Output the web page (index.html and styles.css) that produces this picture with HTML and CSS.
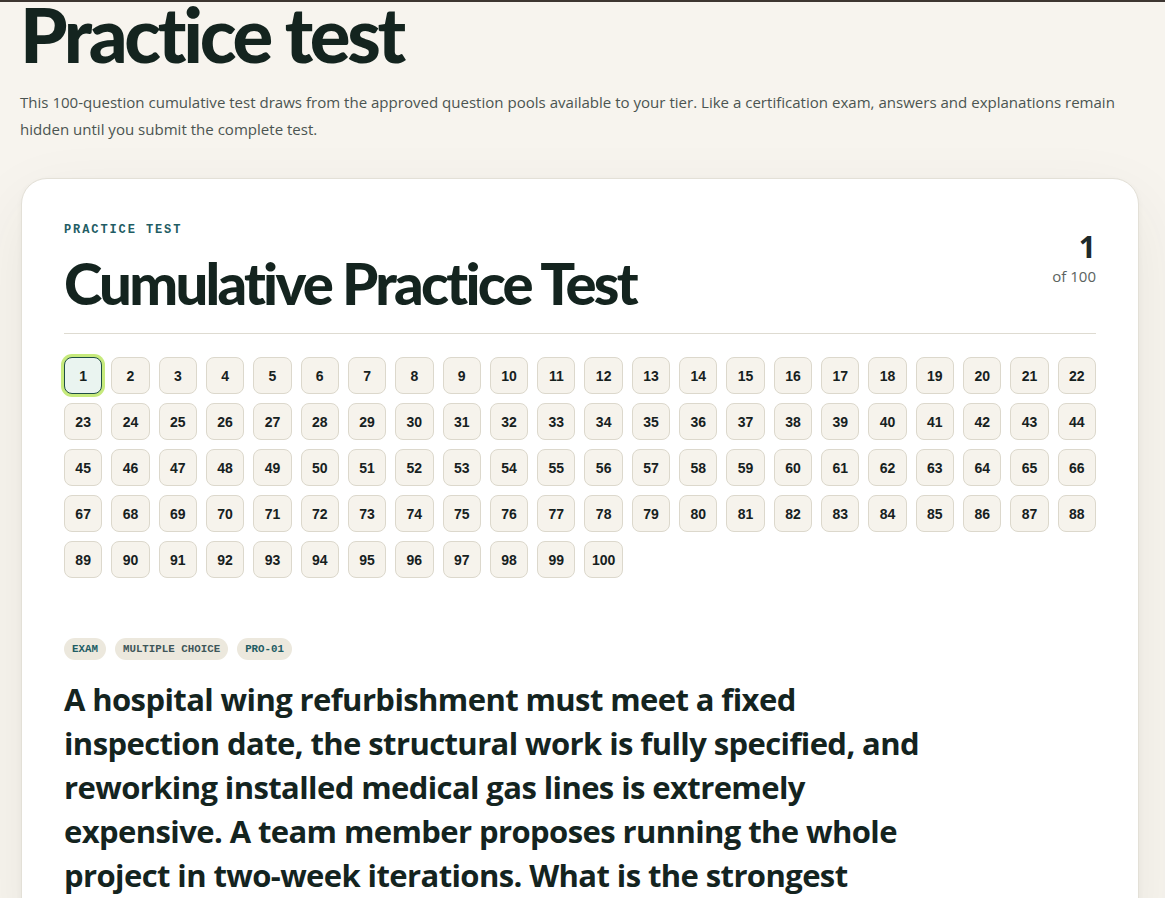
FILE: index.html
```html
<!DOCTYPE html>
<html lang="en">
<head>
<meta charset="utf-8">
<title>Practice test</title>
<link rel="stylesheet" href="styles.css">
</head>
<body>
<div class="topbar"></div>
<main class="page">
  <header class="intro">
    <h1 class="intro-title">Practice test</h1>
    <p class="intro-text">This 100-question cumulative test draws from the approved question pools available to your tier. Like a certification exam, answers and explanations remain hidden until you submit the complete test.</p>
  </header>
  <section class="card">
    <div class="card-head">
      <div class="card-titles">
        <div class="eyebrow">PRACTICE TEST</div>
        <h2 class="card-title">Cumulative Practice Test</h2>
      </div>
      <div class="counter">
        <div class="counter-num">1</div>
        <div class="counter-of">of 100</div>
      </div>
    </div>
    <div class="qgrid">
      <button class="qbtn is-current">1</button><button class="qbtn">2</button><button class="qbtn">3</button><button class="qbtn">4</button><button class="qbtn">5</button><button class="qbtn">6</button><button class="qbtn">7</button><button class="qbtn">8</button><button class="qbtn">9</button><button class="qbtn">10</button>
      <button class="qbtn">11</button><button class="qbtn">12</button><button class="qbtn">13</button><button class="qbtn">14</button><button class="qbtn">15</button><button class="qbtn">16</button><button class="qbtn">17</button><button class="qbtn">18</button><button class="qbtn">19</button><button class="qbtn">20</button>
      <button class="qbtn">21</button><button class="qbtn">22</button><button class="qbtn">23</button><button class="qbtn">24</button><button class="qbtn">25</button><button class="qbtn">26</button><button class="qbtn">27</button><button class="qbtn">28</button><button class="qbtn">29</button><button class="qbtn">30</button>
      <button class="qbtn">31</button><button class="qbtn">32</button><button class="qbtn">33</button><button class="qbtn">34</button><button class="qbtn">35</button><button class="qbtn">36</button><button class="qbtn">37</button><button class="qbtn">38</button><button class="qbtn">39</button><button class="qbtn">40</button>
      <button class="qbtn">41</button><button class="qbtn">42</button><button class="qbtn">43</button><button class="qbtn">44</button><button class="qbtn">45</button><button class="qbtn">46</button><button class="qbtn">47</button><button class="qbtn">48</button><button class="qbtn">49</button><button class="qbtn">50</button>
      <button class="qbtn">51</button><button class="qbtn">52</button><button class="qbtn">53</button><button class="qbtn">54</button><button class="qbtn">55</button><button class="qbtn">56</button><button class="qbtn">57</button><button class="qbtn">58</button><button class="qbtn">59</button><button class="qbtn">60</button>
      <button class="qbtn">61</button><button class="qbtn">62</button><button class="qbtn">63</button><button class="qbtn">64</button><button class="qbtn">65</button><button class="qbtn">66</button><button class="qbtn">67</button><button class="qbtn">68</button><button class="qbtn">69</button><button class="qbtn">70</button>
      <button class="qbtn">71</button><button class="qbtn">72</button><button class="qbtn">73</button><button class="qbtn">74</button><button class="qbtn">75</button><button class="qbtn">76</button><button class="qbtn">77</button><button class="qbtn">78</button><button class="qbtn">79</button><button class="qbtn">80</button>
      <button class="qbtn">81</button><button class="qbtn">82</button><button class="qbtn">83</button><button class="qbtn">84</button><button class="qbtn">85</button><button class="qbtn">86</button><button class="qbtn">87</button><button class="qbtn">88</button><button class="qbtn">89</button><button class="qbtn">90</button>
      <button class="qbtn">91</button><button class="qbtn">92</button><button class="qbtn">93</button><button class="qbtn">94</button><button class="qbtn">95</button><button class="qbtn">96</button><button class="qbtn">97</button><button class="qbtn">98</button><button class="qbtn">99</button><button class="qbtn">100</button>
    </div>
    <div class="tags">
      <span class="tag tag-accent">EXAM</span>
      <span class="tag">MULTIPLE CHOICE</span>
      <span class="tag tag-accent">PRO-01</span>
    </div>
    <h3 class="question">A hospital wing refurbishment must meet a fixed inspection date, the structural work is fully specified, and reworking installed medical gas lines is extremely expensive. A team member proposes running the whole project in two-week iterations. What is the strongest</h3>
  </section>
</main>
</body>
</html>
```

FILE: styles.css
```css
* { box-sizing: border-box; }

html, body {
  margin: 0;
  padding: 0;
}

body {
  background: #f7f4ee;
  color: #14241f;
  font-family: "Open Sans", "Noto Sans", sans-serif;
  overflow: hidden;
}

.topbar {
  height: 2px;
  background: #3d3631;
}

.page {
  padding: 0 26px 0 20px;
}

.intro-title {
  margin: -6px 0 0 0;
  font-family: Lato, "Open Sans", sans-serif;
  font-size: 76px;
  line-height: 1;
  font-weight: 900;
  letter-spacing: -3.3px;
  color: #14241f;
}

.intro-text {
  margin: 17px 0 0 0;
  font-size: 15.05px;
  line-height: 27px;
  color: #4b5451;
  max-width: 1120px;
}

.card {
  margin-top: 35px;
  margin-left: 1px;
  background: #ffffff;
  border: 1px solid #e3e0d7;
  border-radius: 26px;
  padding: 43px 42px 40px 42px;
  box-shadow: 0 24px 70px rgba(60, 50, 20, 0.07), 0 2px 6px rgba(60, 50, 20, 0.04);
}

.card-head {
  display: flex;
  justify-content: space-between;
  align-items: flex-start;
  border-bottom: 1px solid #dedbd1;
  padding-bottom: 20px;
}

.eyebrow {
  font-family: "Liberation Mono", "DejaVu Sans Mono", monospace;
  font-weight: 700;
  font-size: 12px;
  line-height: 16px;
  letter-spacing: 1.9px;
  color: #1f5d64;
}

.card-title {
  margin: 14px 0 0 0;
  font-family: Lato, "Open Sans", sans-serif;
  font-size: 58px;
  line-height: 61px;
  font-weight: 900;
  letter-spacing: -2.75px;
  color: #14241f;
}

.counter {
  text-align: right;
  margin-top: 7px;
}

.counter-num {
  font-size: 30px;
  line-height: 36px;
  font-weight: 700;
  color: #1d2a2a;
}

.counter-of {
  font-size: 15px;
  line-height: 22px;
  color: #5b6360;
}

.qgrid {
  margin-top: 23px;
  display: grid;
  grid-template-columns: repeat(22, 1fr);
  column-gap: 9px;
  row-gap: 9px;
}

.qbtn {
  height: 37px;
  padding: 0;
  background: #f6f3ec;
  border: 1px solid #dcd8cc;
  border-radius: 8px;
  font-family: "Liberation Sans", Arial, sans-serif;
  font-weight: 700;
  font-size: 14px;
  color: #16211e;
}

.qbtn.is-current {
  background: #eaf4f0;
  border-color: #1e4d45;
  box-shadow: 0 0 0 3px #c6ea7c;
}

.tags {
  margin-top: 60px;
  display: flex;
  gap: 9px;
}

.tag {
  display: inline-block;
  height: 22px;
  line-height: 22px;
  padding: 0 8px;
  border-radius: 11px;
  background: #ece8dd;
  font-family: "Liberation Mono", "DejaVu Sans Mono", monospace;
  font-weight: 700;
  font-size: 10.8px;
  letter-spacing: 0;
  color: #3f5659;
}

.tag-accent {
  color: #1f5d64;
}

.question {
  margin: 17px 0 0 0;
  max-width: 870px;
  font-size: 31px;
  line-height: 44px;
  font-weight: 700;
  letter-spacing: -0.6px;
  color: #14241f;
}
```
